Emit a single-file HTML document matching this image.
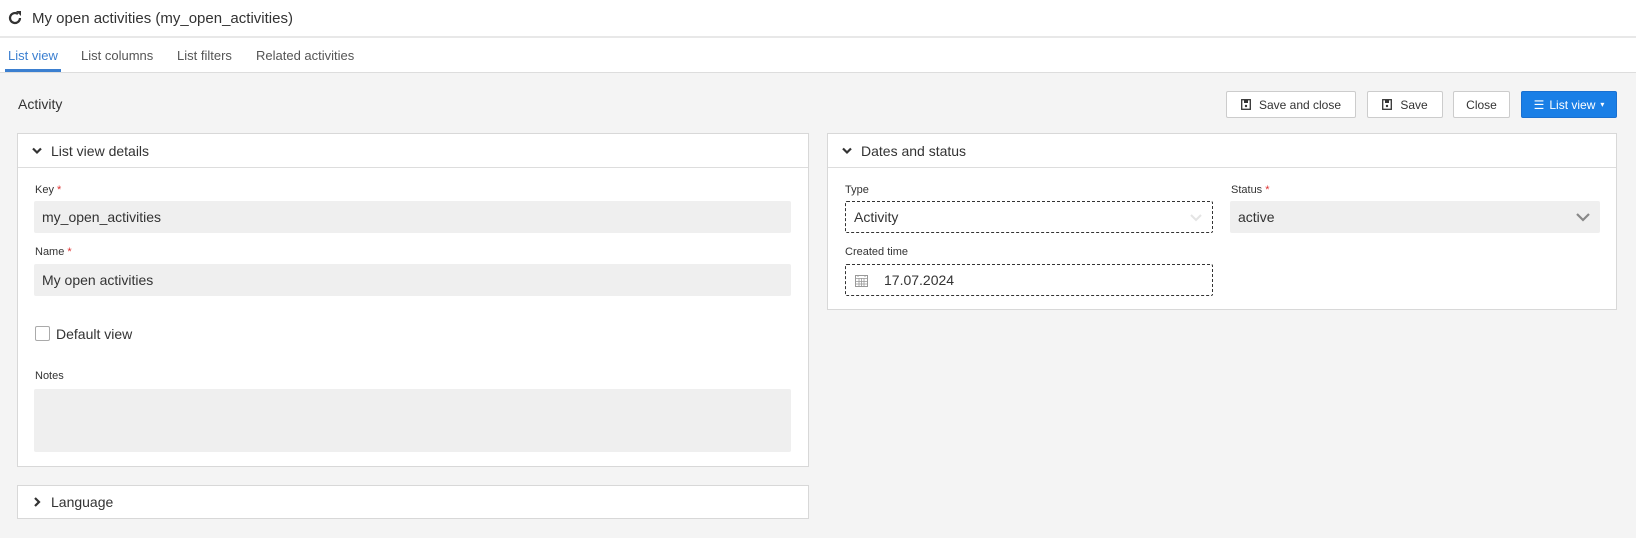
<!DOCTYPE html><html><head><style>
*{box-sizing:border-box;margin:0;padding:0}
body{width:1636px;height:538px;background:#f4f4f4;font-family:"Liberation Sans",sans-serif;color:#333;position:relative;overflow:hidden}
.a{position:absolute}
.top{left:0;top:0;width:1636px;height:38px;background:#fff;border-bottom:2px solid #e8e8e8}
.tabs{left:0;top:38px;width:1636px;height:35px;background:#fff;border-bottom:1px solid #ddd}
.tab{position:absolute;top:10px;font-size:13px;color:#555}
.btn{position:absolute;top:91px;height:27px;background:#fff;border:1px solid #ccc;border-radius:2px;font-size:12px;color:#333;display:flex;align-items:center;justify-content:center;gap:8px}
.panel{position:absolute;background:#fff;border:1px solid #d8d8d8}
.ph{height:34px;border-bottom:1px solid #ddd;font-size:14px;display:flex;align-items:center;padding-left:14px;gap:9px}
.lbl{position:absolute;font-size:11px;color:#333}
.lbl i{color:#d33;font-style:normal}
.inp{position:absolute;height:32px;background:#efefef;border-radius:2px;font-size:14px;display:flex;align-items:center;padding-left:8px;color:#333}
.dash{background:#fff;border:1px dashed #333}
</style></head><body>
<div class="a top">
<svg class="a" style="left:7px;top:10px" width="16" height="16" viewBox="0 0 16 16"><path d="M13 8a5 5 0 1 1-2-4" fill="none" stroke="#333" stroke-width="2.2"/><path d="M9 1h5v5z" fill="#333"/></svg>
<div class="a" style="left:32px;top:10px;font-size:15px;color:#333">My open activities (my_open_activities)</div>
</div>
<div class="a tabs">
<div class="tab" style="left:8px;color:#3b7fd0">List view</div>
<div class="a" style="left:5px;top:31px;width:56px;height:3px;background:#3b7fd0"></div>
<div class="tab" style="left:81px">List columns</div>
<div class="tab" style="left:177px">List filters</div>
<div class="tab" style="left:256px">Related activities</div>
</div>
<div class="a" style="left:18px;top:96px;font-size:14px">Activity</div>
<div class="btn" style="left:1226px;width:130px"><svg width="10" height="11" viewBox="0 0 10 11"><rect x="0.7" y="0.7" width="8.6" height="9.6" fill="none" stroke="#333" stroke-width="1.3"/><rect x="3" y="1" width="4" height="3" fill="#333"/><circle cx="5" cy="7" r="1.2" fill="#333"/></svg>Save and close</div>
<div class="btn" style="left:1367px;width:76px"><svg width="10" height="11" viewBox="0 0 10 11"><rect x="0.7" y="0.7" width="8.6" height="9.6" fill="none" stroke="#333" stroke-width="1.3"/><rect x="3" y="1" width="4" height="3" fill="#333"/><circle cx="5" cy="7" r="1.2" fill="#333"/></svg>Save</div>
<div class="btn" style="left:1453px;width:57px">Close</div>
<div class="btn" style="left:1521px;width:96px;background:#1a7fe6;border-color:#1a70d0;color:#fff;gap:5px"><span>☰</span>List view<span style="font-size:8px">▾</span></div>

<div class="panel" style="left:17px;top:133px;width:792px;height:334px">
<div class="ph"><svg width="10" height="8" viewBox="0 0 10 8"><path d="M1 1.5l4 4 4-4" fill="none" stroke="#333" stroke-width="2.2"/></svg>List view details</div>
</div>
<div class="lbl" style="left:35px;top:184px">Key <i>*</i></div>
<div class="inp" style="left:34px;top:201px;width:757px">my_open_activities</div>
<div class="lbl" style="left:35px;top:246px">Name <i>*</i></div>
<div class="inp" style="left:34px;top:264px;width:757px">My open activities</div>
<div class="a" style="left:35px;top:326px;width:15px;height:15px;border:1px solid #aaa;border-radius:2px;background:#fff"></div>
<div class="a" style="left:56px;top:326px;font-size:14px">Default view</div>
<div class="lbl" style="left:35px;top:370px">Notes</div>
<div class="inp" style="left:34px;top:389px;width:757px;height:63px"></div>

<div class="panel" style="left:17px;top:485px;width:792px;height:34px"><div class="ph" style="border:0;height:32px"><svg width="10" height="10" viewBox="0 0 10 10"><path d="M3 1l4 4-4 4" fill="none" stroke="#333" stroke-width="2.2"/></svg>Language</div></div>

<div class="panel" style="left:827px;top:133px;width:790px;height:177px">
<div class="ph"><svg width="10" height="8" viewBox="0 0 10 8"><path d="M1 1.5l4 4 4-4" fill="none" stroke="#333" stroke-width="2.2"/></svg>Dates and status</div>
</div>
<div class="lbl" style="left:845px;top:184px">Type</div>
<div class="inp dash" style="left:845px;top:201px;width:368px">Activity<svg class="a" style="right:10px;top:12px" width="12" height="8" viewBox="0 0 12 8"><path d="M1 1l5 5 5-5" fill="none" stroke="#e4e4e4" stroke-width="2"/></svg></div>
<div class="lbl" style="left:1231px;top:184px">Status <i>*</i></div>
<div class="inp" style="left:1230px;top:201px;width:370px">active<svg class="a" style="right:10px;top:12px" width="14" height="9" viewBox="0 0 14 9"><path d="M1 1l6 6 6-6" fill="none" stroke="#888" stroke-width="2.2"/></svg></div>
<div class="lbl" style="left:845px;top:246px">Created time</div>
<div class="inp dash" style="left:845px;top:264px;width:368px;padding-left:38px">17.07.2024
<svg class="a" style="left:9px;top:9px" width="13" height="13" viewBox="0 0 13 13"><rect x="0.5" y="1.5" width="12" height="11" fill="none" stroke="#999"/><path d="M0 4.5h13M3 1v2M10 1v2M0 7.5h13M0 10h13M4 4v9M6.5 4v9M9 4v9" stroke="#999" stroke-width="0.8"/></svg></div>
</body></html>
